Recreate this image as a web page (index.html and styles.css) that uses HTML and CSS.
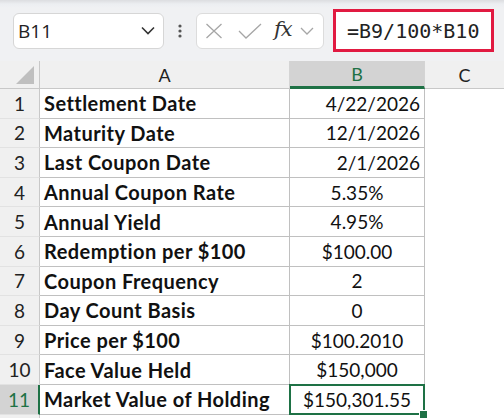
FILE: index.html
```html
<!DOCTYPE html>
<html lang="en">
<head>
    <meta charset="UTF-8">
    <title>Bond Holding</title>
    <link rel="stylesheet" href="styles.css">
</head>
<body>
    <div class="toolbar">
        <div class="name-box">
            <span>B11</span>
            <svg class="chev" width="14" height="9" viewBox="0 0 14 9"><path d="M1 1.5 L7 7.5 L13 1.5" fill="none" stroke="#333" stroke-width="1.6"/></svg>
        </div>
        <div class="grip">
            <svg width="4" height="14" viewBox="0 0 4 14"><circle cx="2" cy="2" r="1.6" fill="#555"/><circle cx="2" cy="7" r="1.6" fill="#555"/><circle cx="2" cy="12" r="1.6" fill="#555"/></svg>
        </div>
        <div class="fx-box">
            <svg class="ic-cancel" width="18" height="16" viewBox="0 0 18 16"><path d="M1.5 1 L16.5 15 M16.5 1 L1.5 15" stroke="#a6a6a6" stroke-width="1.3" fill="none"/></svg>
            <svg class="ic-enter" width="24" height="16" viewBox="0 0 24 16"><path d="M1 8 L8 15 L23 1" stroke="#a6a6a6" stroke-width="1.3" fill="none"/></svg>
            <span class="fx">fx</span>
            <svg class="ic-more" width="14" height="8" viewBox="0 0 14 8"><path d="M1 1 L7 7 L13 1" fill="none" stroke="#a6a6a6" stroke-width="1.3"/></svg>
        </div>
        <div class="formula">=B9/100*B10</div>
    </div>

    <div class="sheet">
        <div class="hd corner"><span class="tri"></span></div>
        <div class="hd">A</div>
        <div class="hd active-col">B</div>
        <div class="hd last">C</div>

        <div class="rh">1</div><div class="cell label">Settlement Date</div><div class="cell right">4/22/2026</div><div class="blank"></div>
        <div class="rh">2</div><div class="cell label">Maturity Date</div><div class="cell right">12/1/2026</div><div class="blank"></div>
        <div class="rh">3</div><div class="cell label">Last Coupon Date</div><div class="cell right">2/1/2026</div><div class="blank"></div>
        <div class="rh">4</div><div class="cell label">Annual Coupon Rate</div><div class="cell">5.35%</div><div class="blank"></div>
        <div class="rh">5</div><div class="cell label">Annual Yield</div><div class="cell">4.95%</div><div class="blank"></div>
        <div class="rh">6</div><div class="cell label">Redemption per $100</div><div class="cell">$100.00</div><div class="blank"></div>
        <div class="rh">7</div><div class="cell label">Coupon Frequency</div><div class="cell">2</div><div class="blank"></div>
        <div class="rh">8</div><div class="cell label">Day Count Basis</div><div class="cell">0</div><div class="blank"></div>
        <div class="rh">9</div><div class="cell label">Price per $100</div><div class="cell">$100.2010</div><div class="blank"></div>
        <div class="rh">10</div><div class="cell label">Face Value Held</div><div class="cell">$150,000</div><div class="blank"></div>
        <div class="rh active-row">11</div><div class="cell label">Market Value of Holding</div><div class="cell selected">$150,301.55</div><div class="blank"></div>
        <div class="rh"></div><div class="blank"></div><div class="blank"></div><div class="blank"></div>
    </div>
</body>
</html>
```

FILE: styles.css
```css
body {
    margin: 0;
    background-color: #f0f1f3;
    font-family: 'Lato', sans-serif;
    color: #111;
    overflow: hidden;
}

/* formula bar strip */
.toolbar {
    height: 61px;
    display: flex;
    align-items: center;
    padding-left: 13px;
    box-sizing: border-box;
    background: linear-gradient(#dcdde0 0, #eceef1 4px, #f0f1f3 8px);
}

.name-box {
    width: 151px;
    height: 36px;
    box-sizing: border-box;
    background-color: #fff;
    border: 1px solid #d6d6d6;
    border-radius: 6px;
    display: flex;
    align-items: center;
    justify-content: space-between;
    padding: 0 8px 0 4px;
    font-family: 'Open Sans', sans-serif;
    font-size: 19px;
    color: #222;
}

.grip {
    width: 32px;
    display: flex;
    justify-content: center;
}

.fx-box {
    width: 128px;
    height: 36px;
    box-sizing: border-box;
    background-color: #fff;
    border: 1px solid #dcdcdc;
    border-radius: 6px;
    display: flex;
    align-items: center;
    padding-left: 8px;
}

.ic-enter {
    margin-left: 15px;
}

.fx {
    font-family: 'DejaVu Serif', serif;
    font-style: italic;
    font-size: 21px;
    color: #333;
    margin-left: 12px;
    margin-top: -4px;
    letter-spacing: -1px;
}

.ic-more {
    margin-left: 8px;
}

.formula {
    margin-left: 9px;
    width: 161px;
    height: 43px;
    box-sizing: border-box;
    background-color: #fff;
    border: 3px solid #e11a41;
    display: flex;
    align-items: center;
    padding-left: 11px;
    font-family: 'DejaVu Sans Mono', monospace;
    font-size: 20px;
    color: #222;
}

/* worksheet grid */
.sheet {
    display: grid;
    grid-template-columns: 40px 250px 135px 1fr;
    grid-template-rows: 28px;
    grid-auto-rows: 29.6px;
    background-color: #fff;
}

.hd {
    background-color: #f0f0f0;
    border-right: 1px solid #d4d4d4;
    border-bottom: 1px solid #c8c8c8;
    display: flex;
    align-items: center;
    justify-content: center;
    font-size: 18px;
    color: #222;
}

.hd.last {
    border-right: none;
}

.corner {
    position: relative;
    border-right-color: #c8c8c8;
}

.tri {
    position: absolute;
    right: 5px;
    bottom: 4px;
    width: 0;
    height: 0;
    border-left: 18px solid transparent;
    border-bottom: 18px solid #bfbfbf;
}

.active-col {
    background-color: #d3d3d3;
    color: #1e7145;
    border-bottom: 3px solid #1e7145;
}

.rh {
    background-color: #f0f0f0;
    border-right: 1px solid #c8c8c8;
    border-bottom: 1px solid #e2e2e2;
    display: flex;
    align-items: center;
    justify-content: center;
    font-size: 19px;
    color: #222;
}

.active-row {
    background-color: #d3d3d3;
    color: #1e7145;
    border-right: 2px solid #1e7145;
}

.cell {
    border-right: 1px solid #c0c0c0;
    border-bottom: 1px solid #c0c0c0;
    display: flex;
    align-items: center;
    justify-content: center;
    font-size: 19px;
    padding: 0 4px;
    white-space: nowrap;
}

.cell.label {
    justify-content: flex-start;
    font-weight: bold;
    font-size: 20px;
    letter-spacing: 0.45px;
}

.cell.right {
    justify-content: flex-end;
}

.cell.selected {
    position: relative;
}

.cell.selected::after {
    content: "";
    position: absolute;
    left: -1px;
    top: -1px;
    right: -1px;
    bottom: -1px;
    border: 2px solid #1e7145;
}

.cell.selected::before {
    content: "";
    position: absolute;
    right: -4px;
    bottom: -5px;
    width: 7px;
    height: 7px;
    background-color: #1e7145;
    border: 1px solid #fff;
    z-index: 1;
}

.blank {
    background-color: #fff;
}
```
